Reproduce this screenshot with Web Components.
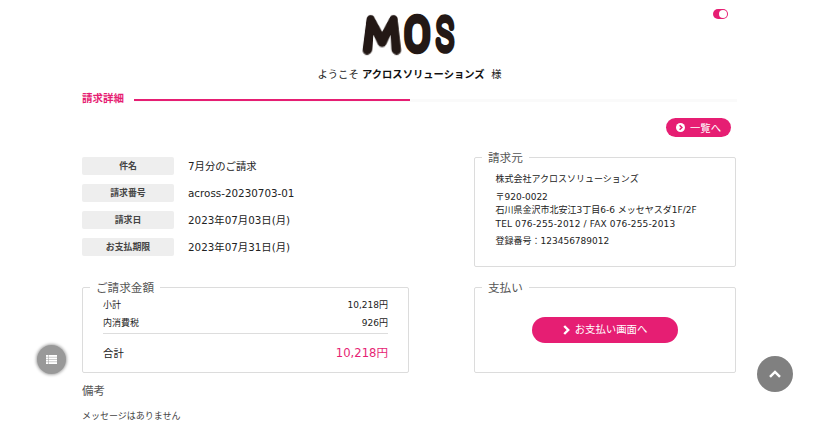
<!DOCTYPE html>
<html lang="ja">
<head>
<meta charset="utf-8">
<title>請求詳細</title>
<style>
  html, body { margin: 0; height: 100%; overflow: hidden; background: #fff; }
  body {
    font-family: "DejaVu Sans", "Noto Sans CJK JP", sans-serif;
    font-size: 9px;
    color: #222;
    --accent: #e61e73;
    --border: #dcdcdc;
  }
</style>
</head>
<body>
<mos-invoice-page></mos-invoice-page>

<script>
/** Base class: puts the static markup of the subclass in an open shadow root. */
class MosElement extends HTMLElement {
  connectedCallback() {
    if (this.shadowRoot) return;
    this.attachShadow({ mode: "open" });
    this.shadowRoot.innerHTML = this.template();
  }
}

/** mos-logo - wordmark: thin letters fattened by a round stroke, the M splayed at its feet. */
class MosLogo extends MosElement {
  template() {
    return `
      <style>
        :host { display: flex; width: 94px; height: 44px; }
        svg { display: block; overflow: visible; }
        .splay {
          transform-origin: 50% 42px;
          transform: matrix3d(1, 0, 0, 0, 0, 1.33, 0, -.0081, 0, 0, 1, 0, 0, 0, 0, 1);
        }
        text {
          font-size: 45px;
          font-weight: 100;
          fill: #231815;
          stroke: #231815;
          stroke-linejoin: round;
          stroke-linecap: round;
        }
        .m { font-family: Lato, sans-serif; }
        .o, .s { font-family: Roboto, sans-serif; }
      </style>
      <svg class="splay" width="42" height="44" viewBox="0 0 42 44">
        <text class="m" transform="translate(-.6 37.4) scale(1.02 .97)" stroke-width="9.4">M</text>
      </svg>
      <svg width="52" height="44" viewBox="42 0 52 44">
        <text class="o" transform="translate(43.2 37) scale(.8 .99)" stroke-width="8.8">O</text>
        <text class="s" transform="translate(74.4 37) scale(.63 1)" stroke-width="7.6">S</text>
      </svg>`;
  }
}

/** mos-switch - small toggle, always drawn on. */
class MosSwitch extends MosElement {
  template() {
    return `
      <style>
        :host {
          display: flex; justify-content: flex-end; align-items: center;
          box-sizing: border-box; width: 15px; height: 10px; padding: 1px;
          border-radius: 5px; background: var(--accent);
        }
        i { width: 8px; height: 8px; border-radius: 50%; background: #fff; }
      </style>
      <i></i>`;
  }
}

/** mos-heading - section title with the two-tone progress line. */
class MosHeading extends MosElement {
  template() {
    return `
      <style>
        :host { display: flex; align-items: center; height: 14px; }
        b { flex: none; width: 52px; font-size: 10.5px; line-height: 14px; color: var(--accent); }
        .line { flex: 1; height: 3px; margin-top: 4px; background: #fafafa; }
        .line i { display: block; width: 276px; height: 2px; background: var(--accent); }
      </style>
      <b><slot></slot></b><div class="line"><i></i></div>`;
  }
}

/** mos-button - pill link, the icon goes in its own slot. */
class MosButton extends MosElement {
  template() {
    return `
      <style>
        :host {
          display: flex; justify-content: center; align-items: center; gap: 5px;
          height: 19px; border-radius: 13px; background: var(--accent);
          color: #fff; font-size: 10.4px; line-height: 14px;
        }
        ::slotted(svg) { display: block; flex: none; }
      </style>
      <slot name="icon"></slot><span><slot></slot></span>`;
  }
}

/** mos-field - label chip and value. */
class MosField extends MosElement {
  template() {
    return `
      <style>
        :host { display: flex; align-items: center; gap: 14px; height: 18px; }
        b {
          width: 92px; height: 18px; line-height: 18px; border-radius: 2px;
          background: #eee; color: #444; font-size: 8.9px; text-align: center;
        }
        span { font-size: 10.35px; line-height: 18px; color: #222; }
      </style>
      <b>${this.getAttribute("label")}</b><span><slot></slot></span>`;
  }
}

/** mos-box - titled frame. */
class MosBox extends MosElement {
  template() {
    return `
      <style>
        :host { display: block; }
        fieldset {
          box-sizing: border-box; width: 100%; height: 100%; min-width: 0;
          margin: 0; padding: 0; border: 1px solid var(--border); border-radius: 2px;
        }
        legend {
          margin-left: 7px; padding: 0 6px;
          font-size: 11.6px; line-height: 16px; height: 14px; color: #555;
        }
      </style>
      <fieldset><legend>${this.getAttribute("title-text")}</legend><slot></slot></fieldset>`;
  }
}

/** mos-amounts - subtotal, tax and total rows. */
class MosAmounts extends MosElement {
  template() {
    return `
      <style>
        :host { display: block; padding: 1px 20px 0; }
        div { display: flex; justify-content: space-between; align-items: center; height: 18px; }
        .total { height: 36px; border-top: 1px solid #ddd; margin-top: 2px; font-size: 10.4px; }
        .total strong { font-size: 11.6px; font-weight: normal; color: var(--accent); }
      </style>
      <div><span>小計</span><span>10,218円</span></div>
      <div><span>内消費税</span><span>926円</span></div>
      <div class="total"><span>合計</span><strong>10,218円</strong></div>`;
  }
}

/** mos-issuer - address block of the company that bills. */
class MosIssuer extends MosElement {
  template() {
    return `
      <style>
        :host { display: block; padding: 9px 0 0 20.5px; }
        p { margin: 0 0 4.4px; line-height: 13.4px; white-space: nowrap; }
        .tel { letter-spacing: .14px; }
      </style>
      <p>株式会社アクロスソリューションズ</p>
      <p>〒920-0022<br>石川県金沢市北安江3丁目6-6 メッセヤスダ1F/2F<br><span class="tel">TEL 076-255-2012 / FAX 076-255-2013</span></p>
      <p>登録番号：123456789012</p>`;
  }
}

/** mos-fab - floating round button. */
class MosFab extends MosElement {
  template() {
    return `
      <style>
        :host {
          position: absolute; display: flex; justify-content: center; align-items: center;
          border-radius: 50%;
        }
        ::slotted(svg) { display: block; }
      </style>
      <slot></slot>`;
  }
}

class MosInvoicePage extends MosElement {
  template() {
    return `
      <style>
        :host { display: block; position: relative; height: 436px; overflow: hidden; }
        header { display: grid; grid-template-columns: 1fr auto 1fr; padding: 9px 89px 0 90px; }
        mos-logo { grid-column: 2; margin-top: 4px; }
        mos-switch { justify-self: end; }
        .welcome {
          margin: 9px 0 0; padding-left: 2px; text-align: center;
          font-size: 10.3px; line-height: 16px; white-space: pre;
        }
        .welcome b { color: #111; }
        main { width: 655px; margin: 9px 0 0 82px; }
        .back { display: flex; justify-content: flex-end; margin: 13px 6px 0 0; }
        .back mos-button { width: 65px; }
        .grid {
          display: grid; grid-template-columns: 327px 262px; column-gap: 65px;
          grid-template-rows: 117px 93px; row-gap: 13px; margin-top: 13px;
        }
        .fields { display: grid; grid-auto-rows: 18px; gap: 9px; align-content: start; padding-top: 7px; }
        .pay mos-button { width: 146px; height: 26px; margin: 22.5px auto 0; }
        .pay mos-button { line-height: 13px; }
        h2 { margin: 10px 0 0; font-size: 11.5px; font-weight: normal; line-height: 16px; color: #555; }
        .note { margin: 9px 0 0; line-height: 16px; color: #444; }
        .list { left: 37px; top: 345px; width: 29px; height: 29px; background: #999; box-shadow: 0 0 3px 1px #aaa; }
        .top { left: 757px; top: 355.5px; width: 36px; height: 36px; background: #808080; }
      </style>
      <header><mos-logo></mos-logo><mos-switch></mos-switch></header>
      <p class="welcome">ようこそ <b>アクロスソリューションズ</b>&nbsp; 様</p>
      <main>
        <mos-heading>請求詳細</mos-heading>
        <div class="back">
          <mos-button>
            <svg slot="icon" width="9" height="9" viewBox="0 0 9 9"><circle cx="4.5" cy="4.5" r="4.5" fill="#fff"/><path d="M3.6 2.2 5.9 4.5 3.6 6.8" fill="none" stroke="#e61e73" stroke-width="1.5"/></svg>一覧へ</mos-button>
        </div>
        <div class="grid">
          <div class="fields">
            <mos-field label="件名">7月分のご請求</mos-field>
            <mos-field label="請求番号">across-20230703-01</mos-field>
            <mos-field label="請求日">2023年07月03日(月)</mos-field>
            <mos-field label="お支払期限">2023年07月31日(月)</mos-field>
          </div>
          <mos-box title-text="請求元"><mos-issuer></mos-issuer></mos-box>
          <mos-box title-text="ご請求金額"><mos-amounts></mos-amounts></mos-box>
          <mos-box class="pay" title-text="支払い">
            <mos-button>
              <svg slot="icon" width="7" height="10" viewBox="0 0 7 10"><path d="M1.2 1 5.2 5 1.2 9" fill="none" stroke="#fff" stroke-width="2.4"/></svg>お支払い画面へ</mos-button>
          </mos-box>
        </div>
        <h2>備考</h2>
        <p class="note">メッセージはありません</p>
      </main>
      <mos-fab class="list">
        <svg width="11" height="9" viewBox="0 0 11 9"><path d="M0 0h11v9H0z" fill="#fff"/><path d="M0 2.25h11M0 4.5h11M0 6.75h11M2.5 0v9" fill="none" stroke="#aaa" stroke-width=".6"/></svg>
      </mos-fab>
      <mos-fab class="top">
        <svg width="12" height="8" viewBox="0 0 12 8"><path d="M1 6.8 6 1.9 11 6.8" fill="none" stroke="#fff" stroke-width="2.5"/></svg>
      </mos-fab>`;
  }
}

customElements.define("mos-logo", MosLogo);
customElements.define("mos-switch", MosSwitch);
customElements.define("mos-heading", MosHeading);
customElements.define("mos-button", MosButton);
customElements.define("mos-field", MosField);
customElements.define("mos-box", MosBox);
customElements.define("mos-amounts", MosAmounts);
customElements.define("mos-issuer", MosIssuer);
customElements.define("mos-fab", MosFab);
customElements.define("mos-invoice-page", MosInvoicePage);
</script>
</body>
</html>
